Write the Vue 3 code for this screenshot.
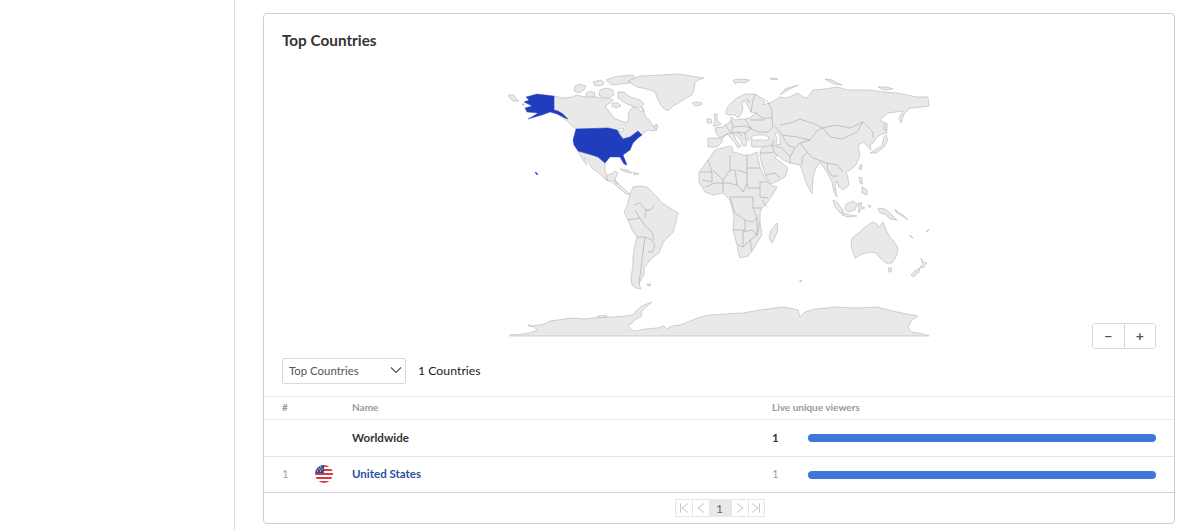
<script setup>
const land = [
  // Canada
  'M554 96L563 98L572 97L577 95L585 97L592 96L600 98L606 97L613 100L610 103L606 105L606 108L608 110L611 114L614 118L621 121L627 123L629 118L628 114L630 110L633 107L639 110L643 112L642 107L640 105L644 110L645 116L649 120L653 126L657 130L653 131L648 130L645 132L643 134L641 135L638 131L634 134L630 137L623 139L621 136L617 130L608 128L576 129L571 125L566 120L561 116L556 112L554 110Z',
  // Arctic islands
  'M575 86L580 84L586 86L584 90L579 93L574 91Z','M593 82L600 80L604 82L603 85L595 86Z','M600 90L607 88L613 90L614 95L608 98L603 98L599 95Z','M618 92L624 92L630 97L640 100L644 104L640 108L632 106L625 103L618 98Z','M606 80L614 77L622 76L633 75L637 79L630 83L620 84L612 85Z','M586 93L591 91L595 93L594 97L586 97Z','M612 103L618 103L621 106L616 108L612 106Z','M654 126L657 124L658 128L655 129Z',
  // Greenland
  'M628 81L640 76L660 75L675 74L686 75L696 77L704 78L698 80L695 83L694 90L692 95L686 98L680 102L673 106L668 111L663 108L660 104L657 97L655 92L647 89L637 87Z',
  'M692 103L697 102L702 103L701 105L695 106Z',
  // Mexico & Central America
  'M578 151L592 155L598 157L602 160L605 163L605 168L605 172L608 175L613 173L615 171L618 173L616 177L615 180L620 185L625 190L630 194L626 194L620 189L612 182L606 180L600 174L592 168L586 158L584 158L587 165L583 160L579 153Z',
  'M620 169L628 170L632 173L626 172Z','M633 172L639 174L634 175Z',
  // South America
  'M630 194L633 187L640 186L647 187L652 192L657 197L662 203L670 208L678 213L676 222L673 232L664 241L663 243L659 253L651 259L648 263L644 268L644 275L642 278L639 284L641 289L636 288L632 285L631 278L633 265L633 257L635 245L637 237L632 230L628 220L624 212L627 206L628 202Z',
  'M647 284L651 284L650 286L647 285Z',
  // Africa
  'M715 150L722 148L730 146L732 147L733 152L738 153L743 155L750 155L757 152L758 158L760 167L765 178L770 185L777 187L773 194L767 203L762 208L760 213L760 222L762 235L757 243L752 251L748 256L740 258L738 252L737 245L733 230L734 217L730 200L723 193L713 195L705 192L699 182L699 172L708 160Z',
  'M777 223L778 230L775 237L772 243L769 238L771 230Z',
  // Eurasia
  'M708 147L708 138L720 138L716 133L715 128L722 127L725 125L729 123L731 120L731 117L735 120L740 119L745 119L750 118L754 114L756 113L751 112L749 108L746 103L744 100L742 104L743 109L741 114L738 118L735 115L730 115L726 114L727 108L732 102L737 98L745 94L755 94L765 100L763 105L772 102L780 97L787 98L798 93L803 97L807 98L813 90L825 89L837 87L848 90L857 90L870 90L883 92L897 93L917 97L928 97L929 106L922 107L913 108L910 108L904 114L901 123L899 118L903 111L888 113L880 120L885 123L887 133L882 134L877 137L873 143L870 145L871 150L868 147L864 142L858 145L860 155L856 165L850 170L846 172L848 178L849 185L843 190L839 187L837 181L835 186L837 197L834 192L832 182L827 172L822 165L820 162L815 170L813 178L812 194L808 187L805 180L802 170L800 165L790 163L783 160L777 155L775 158L782 163L788 168L785 177L778 181L770 184L766 176L762 165L760 156L760 151L763 147L752 147L751 143L752 141L750 139L747 141L746 146L743 146L741 141L737 136L733 133L736 140L741 146L738 148L735 143L730 137L727 134L722 139L722 142L717 147Z',
  // UK, Ireland
  'M714 114L717 114L717 120L721 124L717 126L713 126L715 121Z','M707 119L711 119L712 123L707 123Z',
  // Arctic
  'M733 80L742 79L750 80L745 83L738 82L735 84Z','M770 78L778 79L772 80Z','M780 95L785 89L798 85L788 90Z','M825 79L832 80L842 85L834 84Z','M878 87L887 87L893 89L884 90Z',
  // Asia islands
  'M870 153L878 148L882 146L884 137L886 135L888 140L884 147L876 153Z','M884 124L887 123L887 130L884 130Z','M860 165L862 165L861 170L859 169Z',
  'M859 177L862 178L862 184L860 183Z','M862 187L867 190L867 195L862 193Z',
  'M833 200L838 203L844 212L840 213L835 207Z','M842 213L850 215L857 216L848 217L842 215Z','M846 204L853 201L857 204L855 210L848 212L845 209Z','M858 203L862 203L860 206L865 208L861 209L859 213Z','M868 205L871 206L870 208Z',
  'M878 208L885 209L893 216L897 220L890 219L885 214L880 213Z','M895 209L899 213L903 215L908 220L902 216L896 212Z',
  // Australia etc
  'M852 238L860 232L864 228L868 225L873 222L877 224L878 228L883 222L886 230L890 237L895 243L898 248L897 255L892 263L886 263L880 258L876 253L870 252L862 254L855 258L853 252L851 245Z',
  'M888 268L892 268L891 272L889 272Z','M921 258L923 262L927 263L923 268L920 267L923 264Z','M920 268L919 272L913 277L911 275L916 270Z',
  'M926 232L929 229L927 232Z','M910 235L913 238L911 237Z','M800 280L802 281L800 282Z',
  'M508 95L514 95L516 99L519 101L513 101L510 98Z','M522 104L524 104L524 106Z',
  // Antarctica
  'M510 335L523 334L530 333L537 330L533 326L544 324L550 321L572 318L585 319L600 317L612 317L625 316L633 315L636 311L642 306L652 302L646 307L641 312L642 316L636 319L632 323L628 325L631 330L636 331L645 329L657 328L664 326L667 329L672 326L680 325L690 321L700 317L710 315L725 314L743 313L760 310L782 307L790 308L798 310L800 317L805 312L815 309L837 307L855 308L877 307L897 312L918 316L912 320L908 327L911 332L918 333L927 335L929 336L510 336Z',
  'M598 316L606 315L607 317L599 318Z','M528 325L533 326L531 327Z'
]
const water = [
  'M751 137L756 135L764 135L769 137L768 140L760 140L753 140Z',
  'M775 133L779 133L780 139L780 145L776 144L777 139Z',
  'M620 128L624 129L622 132L619 131Z'
]
const borders = 'M780 125L790 123L800 119L817 125L823 128L835 125L850 128L863 122L873 132L873 138M823 128L830 137L842 139L857 132L863 122M775 126L782 135L797 137L810 140L818 130L823 128M810 140L800 143L807 152L813 158L827 163L837 165L843 172M827 163L828 170L832 176L838 176M772 145L782 148L790 157L790 163M782 135L788 145L795 148L800 143M795 148L790 157M807 152L802 158L802 165M763 147L772 145L774 140M772 145L774 152L777 155M760 153L768 153L774 152M767 100L772 110L772 118L773 127L768 132L758 132L750 128L745 126L733 127L731 120M756 113L762 118L772 118M745 119L750 128L752 128L745 133L746 140M733 127L731 133L737 132L745 133M725 125L731 133L727 134M737 132L742 136M750 120L765 120M747 98L749 103M751 112L753 100L755 94M720 138L727 134M708 160L712 172L700 172M712 172L712 182L702 180M713 170L723 180L723 183L715 183L705 187M730 155L730 170L723 180M730 170L735 170L737 185L728 183L723 183L723 192M747 155L747 173L737 170M747 173L747 183L743 192L737 185M747 168L760 168M747 183L748 188L760 188L760 182L767 182M760 188L760 197L768 198M762 200L767 207M742 197L753 197L753 208L757 218L752 222L745 220L735 213M742 197L730 197L735 213M753 208L762 208M745 220L745 230L733 230M745 230L743 232L752 230L757 235L750 240L743 247L738 245M743 232L743 247M757 218L757 235L760 222M750 240L752 251M634 205L640 203L646 210L650 210L655 205M628 220L640 218L645 226L652 232L654 240M637 237L645 237L652 240L655 246L652 252L648 252M640 218L635 210M646 210L645 218M645 237L642 260L639 284M606 175L608 181M614 180L618 185M765 175L775 173L780 178'
</script>

<template>
  <div class="page">
    <aside class="side"></aside>
    <main class="main">
      <section class="card">
        <h2 class="title">Top Countries</h2>
        <div class="map-wrap">
          <svg class="map" width="422" height="264" viewBox="508 73 422 264">
            <g class="land"><path v-for="(d, i) in land" :key="i" :d="d" /></g>
            <g class="water"><path v-for="(d, i) in water" :key="i" :d="d" /></g>
            <path class="borders" :d="borders" />
            <g class="usa">
              <path d="M576 129L608 128L617 130L620 135L623 139L630 137L638 131L642 135L638 138L633 143L630 150L623 155L625 160L627 165L624 164L620 157L610 157L605 163L598 157L592 155L578 151L574 145L573 140Z" />
              <path d="M526 97L537 94L554 96L554 110L558 111L563 114L568 119L565 118L557 114L550 112L542 115L535 117L528 119L535 115L538 113L527 112L525 108L532 106L524 102L529 100Z" />
              <path d="M535 172L537 173L538 175L536 174Z" />
            </g>
          </svg>
          <div class="zoom">
            <button class="zoom-btn">−</button>
            <button class="zoom-btn">+</button>
          </div>
        </div>
        <div class="controls">
          <div class="select">
            <span>Top Countries</span>
            <svg width="12" height="8" viewBox="0 0 12 8"><path d="M1 1.5L6 6.5L11 1.5" fill="none" stroke="#555" stroke-width="1.2" /></svg>
          </div>
          <span class="count">1 Countries</span>
        </div>
        <div class="row head">
          <span>#</span><span></span><span>Name</span><span>Live unique viewers</span>
        </div>
        <div class="row total">
          <span></span><span></span><span class="strong">Worldwide</span>
          <div class="metric"><span class="strong num">1</span><div class="bar"></div></div>
        </div>
        <div class="row country">
          <span class="muted">1</span>
          <svg class="flag" width="18" height="18" viewBox="0 0 18 18">
            <defs><clipPath id="flag-circle"><circle cx="9" cy="9" r="9" /></clipPath></defs>
            <g clip-path="url(#flag-circle)">
              <rect width="18" height="18" fill="#fff" />
              <rect y="0" width="18" height="2" fill="#d9384a" />
              <rect y="4" width="18" height="2" fill="#d9384a" />
              <rect y="8" width="18" height="2" fill="#d9384a" />
              <rect y="12" width="18" height="2" fill="#d9384a" />
              <rect y="16" width="18" height="2" fill="#d9384a" />
              <rect width="9" height="8" fill="#3c4a86" />
              <path d="M2 2h1M5 2h1M3.5 4h1M6.5 4h1M2 6h1M5 6h1" stroke="#fff" stroke-width="1" />
            </g>
          </svg>
          <a class="link">United States</a>
          <div class="metric"><span class="muted num">1</span><div class="bar"></div></div>
        </div>
        <div class="pager">
          <div class="pages">
            <span class="pg"><svg width="12" height="12" viewBox="0 0 12 12"><path d="M2.5 1.5V10.5M10 1.5L4 6L10 10.5" /></svg></span>
            <span class="pg"><svg width="12" height="12" viewBox="0 0 12 12"><path d="M9 1.5L3 6L9 10.5" /></svg></span>
            <span class="pg cur">1</span>
            <span class="pg"><svg width="12" height="12" viewBox="0 0 12 12"><path d="M3 1.5L9 6L3 10.5" /></svg></span>
            <span class="pg narrow"><svg width="12" height="12" viewBox="0 0 12 12"><path d="M9.5 1.5V10.5M2 1.5L8 6L2 10.5" /></svg></span>
          </div>
        </div>
      </section>
    </main>
  </div>
</template>

<style>
html, body { margin: 0; background: #fff; overflow: hidden; }
</style>

<style scoped>
.page { display: flex; height: 530px; font-family: Lato, "Open Sans", sans-serif; color: #333; overflow: hidden; }
.side { width: 234px; flex: none; border-right: 1px solid #dcdcdc; }
.main { flex: 1; padding: 13px 25px 0 28px; min-width: 0; }
.card { height: 511px; box-sizing: border-box; border: 1px solid #cfcfcf; border-radius: 4px; display: flex; flex-direction: column; }
.title { margin: 0; padding: 17px 18px 11px; height: 18px; font-size: 15.3px; line-height: 18px; font-weight: 700; color: #333; }
.map-wrap { position: relative; height: 294px; display: flex; justify-content: center; }
.map { display: block; margin: 13px 0 0 -1px; }
.land path { fill: #e9e9e9; stroke: #aeaeae; stroke-width: 0.55; stroke-linejoin: round; }
.water path { fill: #fff; stroke: #aeaeae; stroke-width: 0.5; }
.borders { fill: none; stroke: #a6a6a6; stroke-width: 0.6; }
.usa path { fill: #1f3dbd; stroke: #1f3dbd; stroke-width: 0.4; }
.zoom { position: absolute; right: 18px; top: 263px; display: flex; width: 64px; height: 26px; box-sizing: border-box; border: 1px solid #d9d9d9; border-radius: 3px; }
.zoom-btn { flex: 1; padding: 0; border: 0; background: #fff; font: 700 14px/22px Lato, sans-serif; color: #556; }
.zoom-btn + .zoom-btn { border-left: 1px solid #d9d9d9; }
.controls { display: flex; align-items: center; gap: 12px; padding: 4px 18px 0; height: 26px; margin-bottom: 12px; }
.select { width: 124px; height: 26px; box-sizing: border-box; border: 1px solid #d9d9d9; border-radius: 2px; display: flex; align-items: center; justify-content: space-between; padding: 0 3px 2px 6px; font-size: 11.4px; color: #555; }
.count { font-size: 12.3px; color: #222; padding-bottom: 2px; }
.row { display: grid; grid-template-columns: 33px 37px 420px 1fr; align-items: center; padding: 0 18px 2px; box-sizing: border-box; border-top: 1px solid #ececec; }
.head { height: 23px; font-size: 10px; font-weight: 700; color: #9a9a9a; }
.total { height: 37px; font-size: 11.6px; }
.country { height: 36px; border-top-color: #e4e4e4; font-size: 11.5px; }
.strong { font-weight: 700; color: #333; }
.muted { color: #a3a3a3; }
.flag { display: block; }
.link { font-weight: 700; color: #2a4f9e; }
.metric { display: flex; align-items: center; }
.num { width: 36px; flex: none; }
.bar { flex: 1; height: 8px; margin-top: 2px; border-radius: 4px; background: #3f76d9; }
.pager { flex: 1; display: flex; align-items: center; justify-content: center; border-top: 1px solid #d4d4d4; }
.pages { display: flex; height: 18px; margin-left: 1px; border: 1px solid #e6e6e6; box-sizing: border-box; }
.pg { width: 16px; display: flex; align-items: center; justify-content: center; font-size: 12px; color: #666; }
.pg + .pg { border-left: 1px solid #e6e6e6; }
.pg.cur { width: 22px; background: #e9e9e9; border-left: 0; }
.pg.narrow { width: 15px; }
.pg svg path { fill: none; stroke: #c4c4c4; stroke-width: 1; }
</style>
